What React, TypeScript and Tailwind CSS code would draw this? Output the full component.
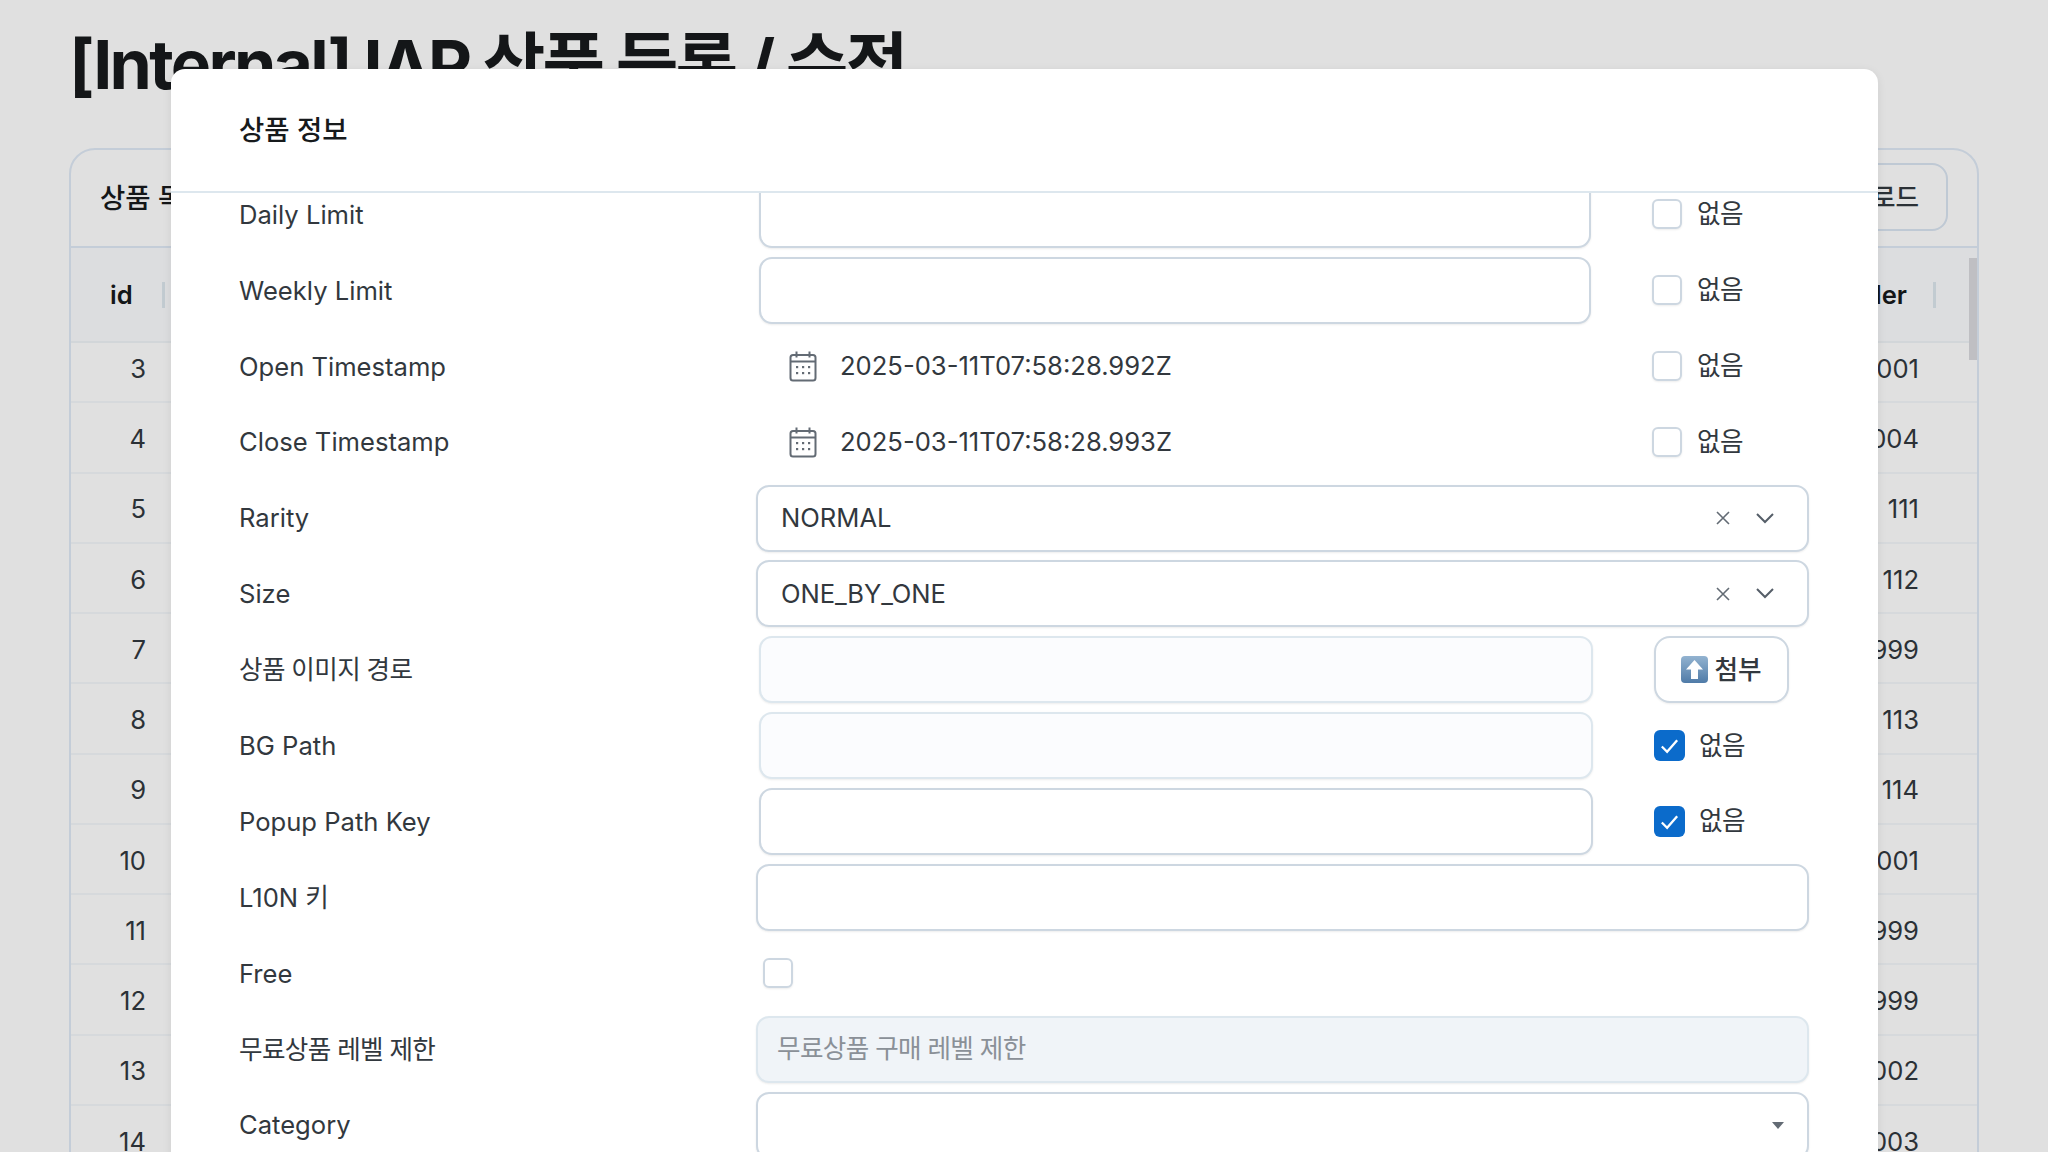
import React from "react";

const font = { fontFamily: '"Inter","Noto Sans CJK KR","Noto Sans",sans-serif' };

const rows: [number, string][] = [
  [3, "1001"], [4, "1004"], [5, "111"], [6, "112"], [7, "1999"], [8, "113"], [9, "114"],
  [10, "2001"], [11, "1999"], [12, "1999"], [13, "2002"], [14, "2003"],
];

function CalendarIcon() {
  return (
    <svg width="28" height="31" viewBox="0 0 28 31" fill="none" className="shrink-0">
      <rect x="1.5" y="4" width="25" height="25.5" rx="2.5" stroke="#636B74" strokeWidth="2" />
      <path d="M1.5 10.5h25" stroke="#636B74" strokeWidth="2" />
      <path d="M7.5 0.5v6M20.5 0.5v6" stroke="#636B74" strokeWidth="2" />
      {[8, 14, 20].map((x) =>
        [16, 22].map((y) => <rect key={`${x}-${y}`} x={x - 1} y={y - 1} width="2.2" height="2.2" fill="#636B74" />)
      )}
    </svg>
  );
}

function Box({ checked }: { checked?: boolean }) {
  if (checked) {
    return (
      <span className="flex h-[31px] w-[31px] shrink-0 items-center justify-center rounded-[6px] bg-[#0B6BCB]">
        <svg width="23" height="23" viewBox="0 0 24 24" fill="none">
          <path d="M4 13l5.5 5.5L20 6.5" stroke="#fff" strokeWidth="2.4" />
        </svg>
      </span>
    );
  }
  return <span className="block h-[30px] w-[30px] shrink-0 rounded-[6px] border-2 border-[#CDD7E1] bg-white shadow-[0_1px_2px_rgba(21,21,21,0.08)]" />;
}

function Field({ className = "", children }: { className?: string; children?: React.ReactNode }) {
  return (
    <div className={`flex h-[67px] items-center rounded-[13px] border-2 bg-white shadow-[0_1px_2px_rgba(21,21,21,0.08)] ${className}`}>
      {children}
    </div>
  );
}

function None({ checked }: { checked?: boolean }) {
  return (
    <div className={`flex items-center ${checked ? "ml-[61px] gap-[14px]" : "ml-[61px] gap-[15px]"}`}>
      <Box checked={checked} />
      <span className="text-[25.6px] tracking-[-0.5px] text-[#32383E]">없음</span>
    </div>
  );
}

function Row({ label, korean, children }: { label: string; korean?: boolean; children: React.ReactNode }) {
  return (
    <div className="flex h-[67px] items-center">
      <div className={`w-[520px] shrink-0 pt-[1px] text-[25.6px] text-[#32383E] ${korean ? "tracking-[-0.65px]" : ""}`}>{label}</div>
      <div className="flex min-w-0 flex-1 items-center">{children}</div>
    </div>
  );
}

function SelectControls() {
  return (
    <div className="ml-auto flex items-center gap-[26px] pr-[33px]">
      <svg width="14" height="14" viewBox="0 0 14 14" fill="none">
        <path d="M1 1l12 12M13 1L1 13" stroke="#636B74" strokeWidth="1.6" />
      </svg>
      <svg width="18" height="11" viewBox="0 0 18 11" fill="none">
        <path d="M1 1l8 8 8-8" stroke="#555E68" strokeWidth="2" />
      </svg>
    </div>
  );
}

export default function App() {
  return (
    <div style={font} className="relative h-[1152px] w-[2048px] overflow-hidden bg-white text-[#171A1C]">
      <div className="px-[69px] pt-[24px]">
        <h1 className="h-[124px] text-[68px] font-bold leading-[80px] tracking-[-0.04em] text-[#171A1C]">
          [Internal] IAP 상품 등록 / 수정
        </h1>
        <div className="h-[1100px] overflow-hidden rounded-[26px] border-2 border-[#E0EAF6] bg-white">
          <div className="flex h-[98px] items-center justify-between border-b-2 border-[#E0EAF6] pl-[29px] pr-[29px]">
            <span className="pt-[2px] text-[27.5px] font-medium">상품 목록</span>
            <div className="-mt-[2px] flex h-[68px] w-[200px] items-center justify-end rounded-[16px] border-2 border-[#DAE5F2] pr-[27px] pt-[3px] text-[25.6px] font-medium text-[#32383E]">
              업로드
            </div>
          </div>
          <div className="relative isolate bg-white">
            <div className="relative z-10 flex h-[95px] items-center justify-between border-b-2 border-[#F0F4F8] bg-[#FBFCFE] pt-[2px] text-[25.6px] font-semibold">
              <div className="flex items-center">
                <span className="ml-[39px]">id</span>
                <span className="ml-[29px] h-[26px] w-[3px] bg-[#DDE7EE]" />
              </div>
              <div className="mr-[41px] flex items-center">
                <span>Handler</span>
                <span className="ml-[26px] h-[26px] w-[3px] bg-[#DDE7EE]" />
              </div>
            </div>
            <div className="-mt-[10px]">
              {rows.map(([id, v]) => (
                <div key={id} className="flex h-[70.25px] items-center justify-between border-b-2 border-[#F4F7FB] pl-[40px] pr-[58px] pt-[4px] text-[25.6px] text-[#32383E]">
                  <span className="w-[35px] text-right">{id}</span>
                  <span>{v}</span>
                </div>
              ))}
            </div>
            <div className="absolute right-0 top-[10px] z-20 h-[102px] w-[8px] bg-[#DADADF]" />
          </div>
        </div>
      </div>

      <div className="absolute inset-0 bg-black/[.12]" />

      <div className="absolute left-[171px] top-[69px] flex h-[1150px] w-[1707px] flex-col overflow-hidden rounded-[14px] bg-white shadow-[0_2px_10px_rgba(21,21,21,0.08)]">
        <div className="h-[124px] shrink-0 border-b-2 border-[#DDE7EE] pl-[68px] pt-[41px]">
          <h2 className="text-[27.5px] font-medium leading-[40px] text-[#171A1C]">상품 정보</h2>
        </div>
        <div className="min-h-0 flex-1 overflow-hidden pl-[68px] pr-[68px]">
          <div className="-mt-[12px] flex flex-col gap-[8.9px]">
            <Row label="Daily Limit">
              <Field className="w-[832px] border-[#CDD7E1]" />
              <None />
            </Row>
            <Row label="Weekly Limit">
              <Field className="w-[832px] border-[#CDD7E1]" />
              <None />
            </Row>
            <Row label="Open Timestamp">
              <div className="flex w-[832px] items-center gap-[23px] pl-[30px] text-[25.6px] text-[#32383E]">
                <CalendarIcon />
                <span>2025-03-11T07:58:28.992Z</span>
              </div>
              <None />
            </Row>
            <Row label="Close Timestamp">
              <div className="flex w-[832px] items-center gap-[23px] pl-[30px] text-[25.6px] text-[#32383E]">
                <CalendarIcon />
                <span>2025-03-11T07:58:28.993Z</span>
              </div>
              <None />
            </Row>
            <Row label="Rarity">
              <Field className="-ml-[3px] w-[1053px] border-[#CDD7E1] pl-[23px] text-[25.6px] text-[#32383E]">
                <span>NORMAL</span>
                <SelectControls />
              </Field>
            </Row>
            <Row label="Size">
              <Field className="-ml-[3px] w-[1053px] border-[#CDD7E1] pl-[23px] text-[25.6px] tracking-[-0.1px] text-[#32383E]">
                <span>ONE_BY_ONE</span>
                <SelectControls />
              </Field>
            </Row>
            <Row label="상품 이미지 경로" korean>
              <Field className="w-[834px] border-[#DDE7EE] !bg-[#FBFCFE]" />
              <div className="ml-[61px] flex h-[67px] w-[135px] items-center justify-center gap-[6px] rounded-[16px] border-2 border-[#CDD7E1] bg-white text-[25.6px] font-medium text-[#32383E] shadow-[0_1px_2px_rgba(21,21,21,0.08)]">
                <svg width="27" height="27" viewBox="0 0 27 27">
                  <defs>
                    <linearGradient id="emojiBg" x1="0" y1="0" x2="0" y2="1">
                      <stop offset="0" stopColor="#93B3D0" />
                      <stop offset="1" stopColor="#4F7BA8" />
                    </linearGradient>
                  </defs>
                  <rect width="27" height="27" rx="4" fill="url(#emojiBg)" />
                  <path d="M13.5 4L22 13.5h-5V23h-7v-9.5H5z" fill="#fff" />
                </svg>
                <span>첨부</span>
              </div>
            </Row>
            <Row label="BG Path">
              <Field className="w-[834px] border-[#DDE7EE] !bg-[#FBFCFE]" />
              <None checked />
            </Row>
            <Row label="Popup Path Key">
              <Field className="w-[834px] border-[#CDD7E1]" />
              <None checked />
            </Row>
            <Row label="L10N 키">
              <Field className="-ml-[3px] w-[1053px] border-[#CDD7E1]" />
            </Row>
            <Row label="Free">
              <span className="ml-[4px]"><Box /></span>
            </Row>
            <Row label="무료상품 레벨 제한" korean>
              <Field className="-ml-[3px] w-[1053px] border-[#DDE7EE] !bg-[#F0F4F8] pl-[19px] text-[25.6px] tracking-[-0.65px] text-[#8A9097]">
                <span>무료상품 구매 레벨 제한</span>
              </Field>
            </Row>
            <Row label="Category">
              <Field className="-ml-[3px] w-[1053px] justify-end border-[#CDD7E1] pr-[23px]">
                <svg width="12" height="7" viewBox="0 0 12 7"><path d="M0 0h12L6 7z" fill="#636B74" /></svg>
              </Field>
            </Row>
          </div>
        </div>
      </div>
    </div>
  );
}
